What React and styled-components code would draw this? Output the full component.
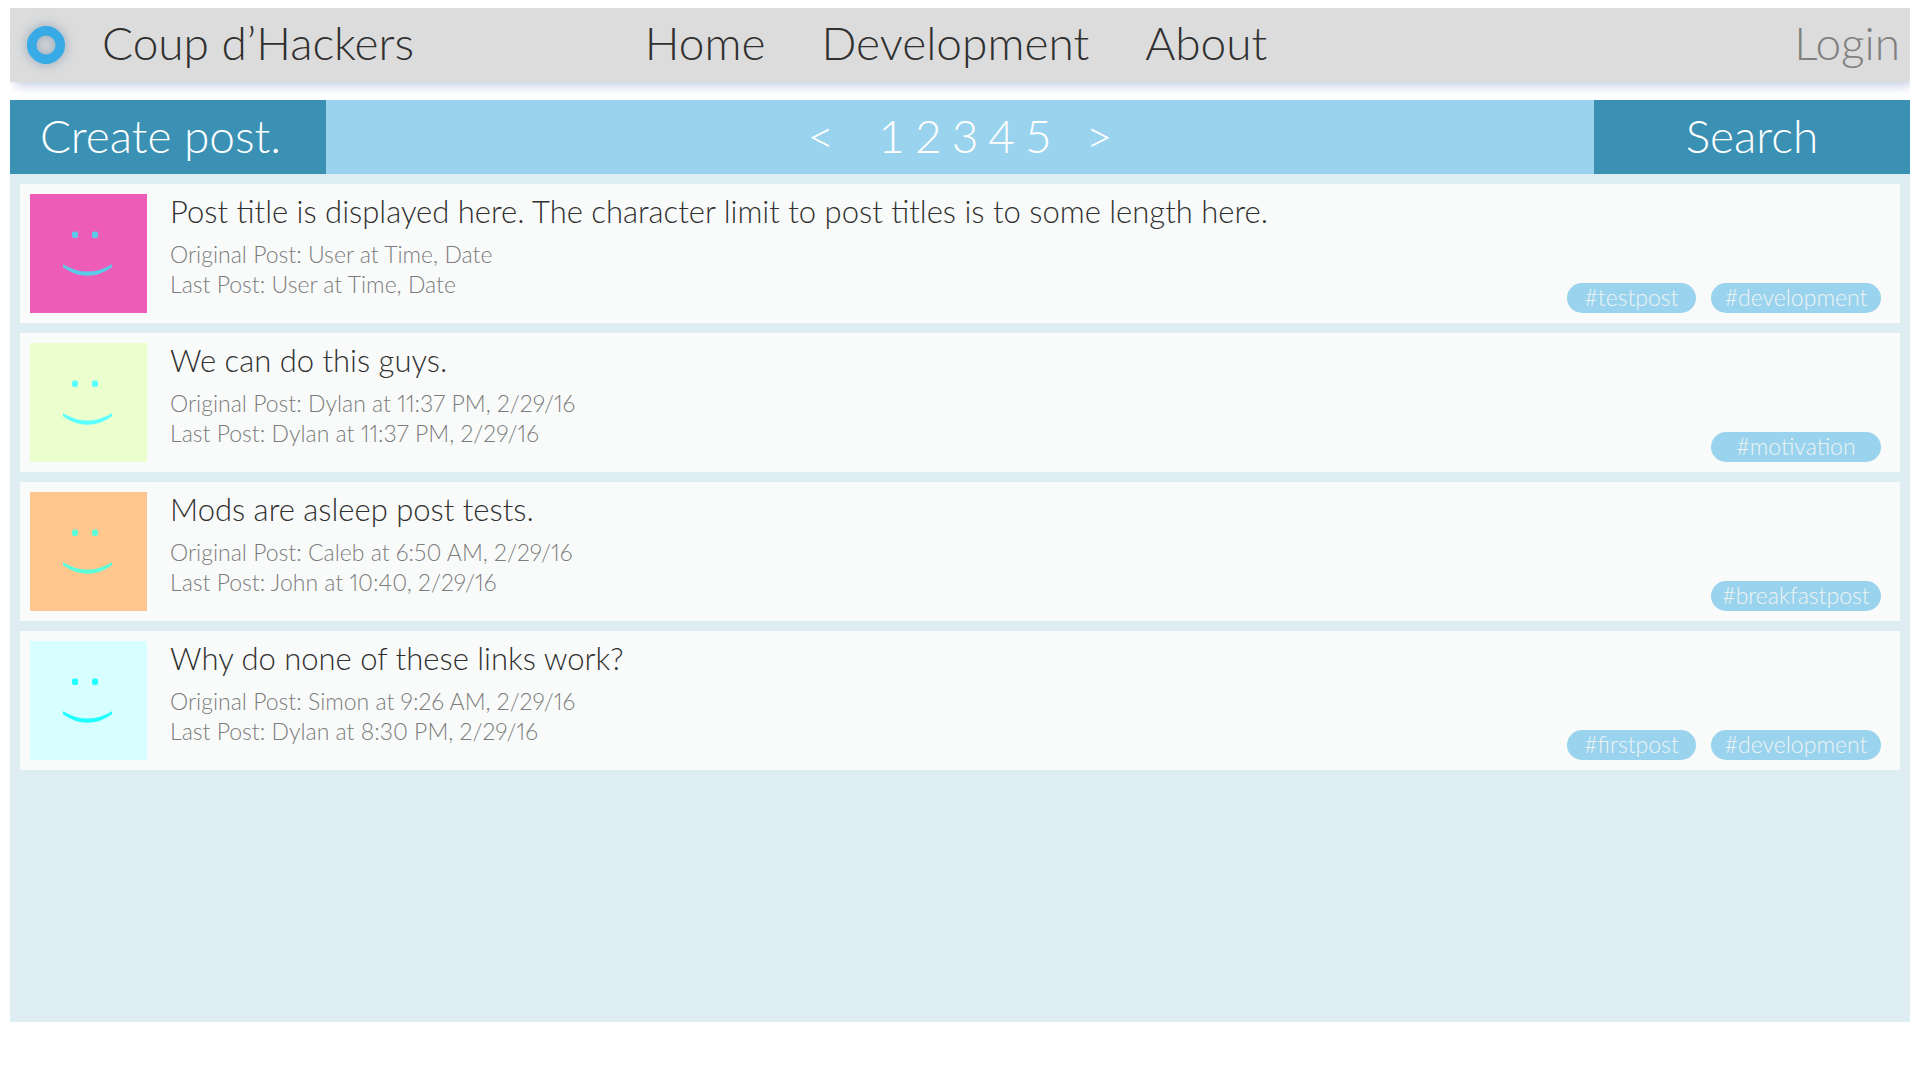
import React from "react";
import styled, { createGlobalStyle } from "styled-components";

const GlobalStyle = createGlobalStyle`
  *, *::before, *::after { box-sizing: border-box; }
  body {
    margin: 0;
    background: #ffffff;
    color: #303030;
    font-family: Lato, "Open Sans", sans-serif;
    font-weight: 300;
  }
  a { color: inherit; text-decoration: none; }
  button { font: inherit; color: inherit; border: 0; padding: 0; background: none; cursor: pointer; }
`;

const Page = styled.div`
  display: flex;
  flex-direction: column;
  min-height: 100vh;
  padding: 8px 10px 58px;
`;

const Header = styled.header`
  display: grid;
  grid-template-columns: 1fr auto 1fr;
  align-items: center;
  height: 74px;
  padding: 0 10px 4px 16px;
  background: #dcdcdc;
  box-shadow: 3px 6px 10px -2px rgba(68, 100, 170, 0.3);
  clip-path: inset(0 0 -18px 0);
  font-size: 46px;
  line-height: 56px;
`;

const Brand = styled.a`
  display: flex;
  align-items: center;
  gap: 36px;
`;

const Logo = styled.svg`
  width: 40px;
  height: 40px;
  margin-top: 4px;
  overflow: visible;
  filter: drop-shadow(0 0 6px rgba(70, 110, 150, 0.5));
`;

const Nav = styled.nav`
  display: flex;
  gap: 56px;
  padding-right: 14px;
`;

const Login = styled.a`
  justify-self: end;
  color: #808080;
`;

const Toolbar = styled.div`
  display: grid;
  grid-template-columns: 316px 1fr 316px;
  height: 74px;
  margin-top: 18px;
  background: #99d3ed;
  color: #ffffff;
  font-size: 46px;
  line-height: 56px;
`;

const Action = styled.button`
  background: #3a91b4;
  text-align: ${(p) => p.$align || "center"};
  && { padding: 0 30px 2px; }
`;

const Pagination = styled.nav`
  display: flex;
  align-items: center;
  justify-content: center;
  gap: 34px;
  padding-bottom: 2px;
`;

const Pages = styled.div`
  display: flex;
  gap: 10px;
  padding-left: 10px;
`;

const Board = styled.main`
  display: flex;
  flex: 1;
  flex-direction: column;
  gap: 10px;
  padding: 10px;
  background: #deedf2;
`;

const Post = styled.article`
  display: flex;
  gap: 23px;
  padding: 10px 19px 10px 10px;
  background: #f9fbfa;
`;

const Face = styled.svg`
  flex: none;
  width: 117px;
  height: 119px;
`;

const Body = styled.div`
  flex: 1;
  min-width: 0;
`;

const Title = styled.h2`
  margin: 0 0 11px;
  font-size: 31px;
  font-weight: 300;
  line-height: 34px;
`;

const Meta = styled.p`
  margin: 0;
  color: #7c7c7c;
  font-size: 23px;
  line-height: 30px;
  font-variant-numeric: proportional-nums;
`;

const Tags = styled.div`
  display: flex;
  align-self: flex-end;
  gap: 15px;
`;

const Tag = styled.a`
  width: ${(p) => (p.$short ? 129 : 170)}px;
  padding-bottom: 2px;
  border-radius: 15px;
  background: #99d3ed;
  color: #f0f3f4;
  font-size: 23px;
  line-height: 28px;
  text-align: center;
`;

const posts = [
  {
    title: "Post title is displayed here. The character limit to post titles is to some length here.",
    original: "User at Time, Date",
    last: "User at Time, Date",
    tags: ["#testpost", "#development"],
    back: "#ed5cb6",
    ink: "#5accea",
  },
  {
    title: "We can do this guys.",
    original: "Dylan at 11:37 PM, 2/29/16",
    last: "Dylan at 11:37 PM, 2/29/16",
    tags: ["#motivation"],
    back: "#eaffcd",
    ink: "#5affff",
  },
  {
    title: "Mods are asleep post tests.",
    original: "Caleb at 6:50 AM, 2/29/16",
    last: "John at 10:40, 2/29/16",
    tags: ["#breakfastpost"],
    back: "#ffc78e",
    ink: "#5affda",
  },
  {
    title: "Why do none of these links work?",
    original: "Simon at 9:26 AM, 2/29/16",
    last: "Dylan at 8:30 PM, 2/29/16",
    tags: ["#firstpost", "#development"],
    back: "#d8ffff",
    ink: "#1effff",
  },
];

function Smiley({ back, ink }) {
  return (
    <Face viewBox="0 0 117 119" aria-hidden="true">
      <rect width="117" height="119" fill={back} />
      <g fill={ink}>
        <rect x="42" y="37.5" width="6" height="6.5" rx="2" />
        <rect x="62" y="37.5" width="6" height="6.5" rx="2" />
        <path d="M33 70.2Q57.500 85 82 70.200V73.200Q57.500 90.500 33 73.200Z" />
      </g>
    </Face>
  );
}

export default function App() {
  return (
    <>
      <GlobalStyle />
      <Page>
        <Header>
          <Brand href="#">
            <Logo viewBox="0 0 40 40" aria-hidden="true">
              <path
                fill="#38abe6"
                fillRule="evenodd"
                d="M20 1C26 1 30 3.500 33.500 7S39 14 39 20 37 29.500 33.500 33 26 39 20 39 10 36.500 6.500 33 1 26 1 20 3 10.500 6.500 7 14 1 20 1ZM20 10.500A9.500 9.500 0 1 0 20 29.500A9.500 9.500 0 1 0 20 10.500Z"
              />
            </Logo>
            Coup d’Hackers
          </Brand>
          <Nav>
            <a href="#home">Home</a>
            <a href="#development">Development</a>
            <a href="#about">About</a>
          </Nav>
          <Login href="#login">Login</Login>
        </Header>
        <Toolbar>
          <Action $align="left">Create post.</Action>
          <Pagination aria-label="Pages">
            <button>&lt;</button>
            <Pages>
              {[1, 2, 3, 4, 5].map((n) => (
                <button key={n}>{n}</button>
              ))}
            </Pages>
            <button>&gt;</button>
          </Pagination>
          <Action>Search</Action>
        </Toolbar>
        <Board>
          {posts.map((post) => (
            <Post key={post.title}>
              <Smiley back={post.back} ink={post.ink} />
              <Body>
                <Title>{post.title}</Title>
                <Meta>Original Post: {post.original}</Meta>
                <Meta>Last Post: {post.last}</Meta>
              </Body>
              <Tags>
                {post.tags.map((tag) => (
                  <Tag key={tag} href={tag} $short={tag.length < 11}>
                    {tag}
                  </Tag>
                ))}
              </Tags>
            </Post>
          ))}
        </Board>
      </Page>
    </>
  );
}
